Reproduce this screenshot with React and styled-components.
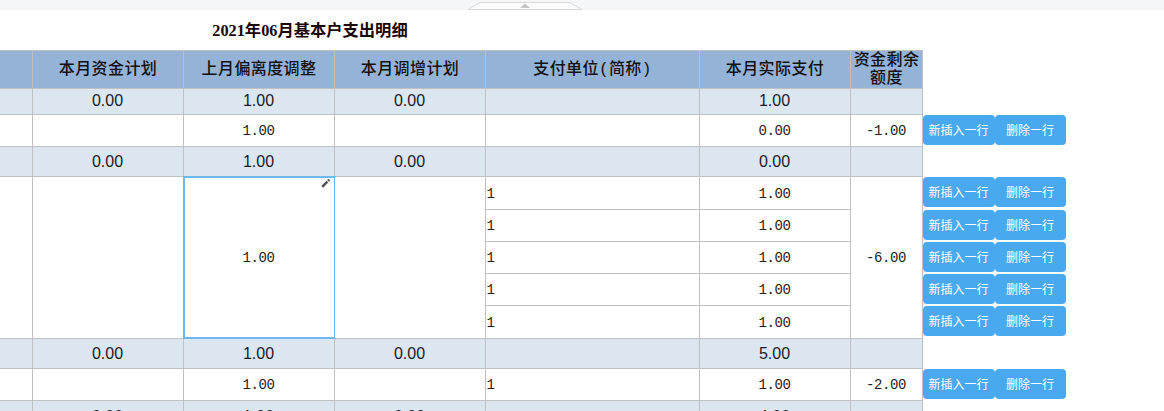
import React from "react"
import styled, { createGlobalStyle } from 'styled-components'

const blocks = [
    {
        sum: ['0.00', '1.00', '0.00', '1.00'],
        rows: [{ unit: '', actual: '0.00' }],
        plan: '1.00',
        remain: '-1.00',
    },
    {
        sum: ['0.00', '1.00', '0.00', '0.00'],
        rows: [1, 2, 3, 4, 5].map(() => ({ unit: '1', actual: '1.00' })),
        plan: '1.00',
        remain: '-6.00',
        active: true,
    },
    {
        sum: ['0.00', '1.00', '0.00', '5.00'],
        rows: [{ unit: '1', actual: '1.00' }],
        plan: '1.00',
        remain: '-2.00',
    },
]

function SumRow({ values, height }) {
    return (
        <Row $height={height}>
            <SumCell />
            <SumCell $height={height}>{values[0]}</SumCell>
            <SumCell $height={height}>{values[1]}</SumCell>
            <SumCell $height={height}>{values[2]}</SumCell>
            <SumCell />
            <SumCell $height={height}>{values[3]}</SumCell>
            <SumCell />
        </Row>
    )
}

function Actions() {
    return (
        <ActionCell>
            <ActionWrap>
                <RowButton>新插入一行</RowButton>
                <RowButton>删除一行</RowButton>
            </ActionWrap>
        </ActionCell>
    )
}

function Pencil() {
    return (
        <PencilIcon width="10" height="10" viewBox="0 0 10 10">
            <path d="M1.2 8.8 L6.4 3.6" stroke="#555" strokeWidth="2.6" fill="none" />
            <path d="M7 3 L8.4 1.6" stroke="#555" strokeWidth="2.4" fill="none" />
        </PencilIcon>
    )
}

function Block({ block, sumHeight, heights }) {
    const span = block.rows.length
    return (
        <>
            <SumRow values={block.sum} height={sumHeight} />
            {block.rows.map((row, i) => (
                <Row key={i} $height={heights[i]}>
                    {i === 0 && <DetailCell rowSpan={span} />}
                    {i === 0 && <DetailCell rowSpan={span} />}
                    {i === 0 && (
                        <DetailCell rowSpan={span} $active={block.active}>
                            {block.plan}
                            {block.active && <Pencil />}
                        </DetailCell>
                    )}
                    {i === 0 && <DetailCell rowSpan={span} />}
                    <UnitCell>{row.unit}</UnitCell>
                    <DetailCell>{row.actual}</DetailCell>
                    {i === 0 && <DetailCell rowSpan={span}>{block.remain}</DetailCell>}
                    <Actions />
                </Row>
            ))}
        </>
    )
}

function App() {
    return (
        <Page>
            <GlobalStyle />
            <TopStrip>
                <svg width="116" height="10" viewBox="0 0 116 10">
                    <path d="M1 9.5 L13 2.5 L103 2.5 L115 9.5 Z" fill="#fbfbfb" stroke="#d9d9d9" />
                    <path d="M53 8 L58 3.5 L63 8 Z" fill="#c4c4c4" />
                </svg>
            </TopStrip>
            <Title>2021年06月基本户支出明细</Title>
            <Sheet>
                <colgroup>
                    <col width="32" />
                    <col width="151" />
                    <col width="151" />
                    <col width="151" />
                    <col width="214" />
                    <col width="151" />
                    <col width="72" />
                    <col width="160" />
                </colgroup>
                <tbody>
                    <Row $height={38}>
                        <HeadCell />
                        <HeadCell>本月资金计划</HeadCell>
                        <HeadCell>上月偏离度调整</HeadCell>
                        <HeadCell>本月调增计划</HeadCell>
                        <HeadCell>支付单位(简称)</HeadCell>
                        <HeadCell>本月实际支付</HeadCell>
                        <HeadCell>资金剩余额度</HeadCell>
                    </Row>
                    <Block block={blocks[0]} sumHeight={26} heights={[32]} />
                    <Block block={blocks[1]} sumHeight={30} heights={[33, 32, 32, 32, 33]} />
                    <Block block={blocks[2]} sumHeight={30} heights={[32]} />
                    <SumRow values={['0.00', '1.00', '0.00', '4.00']} height={31} />
                </tbody>
            </Sheet>
        </Page>
    )
}

const GlobalStyle = createGlobalStyle`
html, body {
    margin: 0;
    height: 411px;
    overflow: hidden;
    background: #fff;
}
`

const Page = styled.div`
width: 1164px;
height: 411px;
overflow: hidden;
color: #000;
font-family: "Liberation Sans", "Noto Sans CJK SC", sans-serif;
`

const TopStrip = styled.div`
height: 10px;
background: #f5f6f8;
padding-left: 467px;
display: flex;
align-items: flex-end;
`

const Title = styled.div`
width: 620px;
height: 40px;
line-height: 41px;
text-align: center;
font-family: "Liberation Serif", "Noto Sans CJK SC", serif;
font-size: 16.3px;
font-weight: 700;
color: #1a0505;
`

const Sheet = styled.table`
border-collapse: collapse;
table-layout: fixed;
width: 1082px;
border-spacing: 0;
`

const Row = styled.tr`
height: ${props => props.$height}px;
`

const BaseCell = styled.td`
border: 1px solid #c0c0c0;
padding: 0;
text-align: center;
vertical-align: middle;
&:first-child {
    border-left: 0;
}
`

const HeadCell = styled(BaseCell)`
background: #95b3d7;
font-family: "Liberation Mono", "Noto Sans CJK SC", monospace;
font-size: 16px;
line-height: 18px;
letter-spacing: 0.4px;
font-weight: 500;
color: #111;
padding-top: 1px;
padding-left: 1px;
`

const SumCell = styled(BaseCell)`
background: #dce6f1;
font-size: 16px;
color: #1a1a2a;
padding-bottom: ${props => props.$height === 26 ? 1 : 0}px;
padding-top: ${props => props.$height === 26 ? 0 : 1}px;
`

const DetailCell = styled(BaseCell)`
position: relative;
background: #fff;
font-family: "Liberation Mono", monospace;
font-size: 14px;
letter-spacing: -0.4px;
padding-top: 1px;
color: #222;
${props => props.$active && `
    &::after {
        content: "";
        position: absolute;
        top: -1px;
        left: -1px;
        right: -2px;
        bottom: -1px;
        border: 2px solid #6cb8f0;
    }
`}
`

const UnitCell = styled(DetailCell)`
text-align: left;
padding-left: 1px;
`

const ActionCell = styled.td`
padding: 0;
border: 0;
vertical-align: top;
`

const ActionWrap = styled.div`
display: flex;
`

const RowButton = styled.button`
display: block;
width: 72px;
height: 30px;
padding: 0;
border: 0;
border-radius: 4px;
background: #49a9ee;
color: #fff;
font-family: "Noto Sans CJK SC", sans-serif;
font-size: 12px;
&:last-child {
    width: 71px;
}
`

const PencilIcon = styled.svg`
position: absolute;
top: 1px;
right: 3px;
z-index: 1;
`

export default App;
